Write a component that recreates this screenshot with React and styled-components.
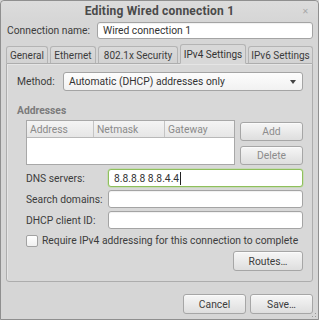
import React from 'react';
import styled, { createGlobalStyle } from 'styled-components';

const Global = createGlobalStyle`
  html, body {
    margin: 0;
    padding: 0;
    background: #d6d6d6;
  }
  * {
    box-sizing: border-box;
  }
`;

const Window = styled.div`
  width: 319px;
  height: 320px;
  border: 1px solid #8f8f8f;
  border-radius: 4px 4px 0 0;
  background: #d6d6d6;
  font-family: Roboto, 'Liberation Sans', sans-serif;
  font-size: 10.3px;
  line-height: 13px;
  color: #3c3c3c;
  display: flex;
  flex-direction: column;
  position: relative;
`;

const TitleBar = styled.div`
  height: 20px;
  display: grid;
  grid-template-columns: 1fr auto 1fr;
  align-items: center;
  background: linear-gradient(#dcdcdc, #d6d6d6);
  border-radius: 4px 4px 0 0;
`;

const Title = styled.div`
  grid-column: 2;
  font-weight: bold;
  font-size: 12px;
  letter-spacing: 0.2px;
  color: #4a4a4a;
`;

const Close = styled.div`
  justify-self: end;
  margin-right: 9px;
  color: #a8a8a8;
  font-size: 8px;
`;

const Body = styled.div`
  padding: 1px 5px 0 5px;
  flex: 1;
  display: flex;
  flex-direction: column;
`;

const Row = styled.div`
  display: flex;
  align-items: center;
  gap: ${({ gap }) => gap || 0}px;
  margin-top: ${({ mt }) => mt || 0}px;
`;

const Label = styled.span`
  width: ${({ w }) => w}px;
  flex: none;
  padding-left: ${({ pl }) => pl || 0}px;
  white-space: nowrap;
`;

const Input = styled.div`
  flex: 1;
  height: ${({ h }) => h || 18}px;
  background: #fff;
  border: 1px solid ${({ focused }) => (focused ? '#8fbf5c' : '#a4a4a4')};
  border-radius: 3px;
  box-shadow: ${({ focused }) => (focused ? '0 0 0 0.5px #b7d99a' : 'inset 0 1px 1px rgba(0,0,0,0.06)')};
  padding: 0 5px;
  display: flex;
  align-items: center;
  color: #333;
`;

const Caret = styled.span`
  display: inline-block;
  width: 1px;
  height: 13px;
  background: #222;
  margin-left: 1px;
`;

const Tabs = styled.div`
  display: flex;
  align-items: flex-end;
  gap: 2px;
  margin-top: 5px;
  height: 19px;
  position: relative;
  z-index: 1;
`;

const Tab = styled.div`
  width: ${({ w }) => w}px;
  height: ${({ active }) => (active ? 20 : 17)}px;
  display: flex;
  align-items: center;
  justify-content: center;
  font-size: 10px;
  border: 1px solid #b4b4b4;
  border-bottom: ${({ active }) => (active ? '1px solid #d8d8d8' : 'none')};
  border-radius: 3px 3px 0 0;
  background: ${({ active }) => (active ? '#d8d8d8' : 'linear-gradient(#dadada, #d2d2d2)')};
  color: ${({ active }) => (active ? '#333' : '#3c3c3c')};
  margin-bottom: ${({ active }) => (active ? -1 : 0)}px;
  white-space: nowrap;
`;

const Panel = styled.div`
  height: 219px;
  border: 1px solid #adadad;
  border-radius: 0 0 3px 3px;
  background: #d8d8d8;
  box-shadow: inset 1px 1px 0 rgba(255,255,255,0.35);
  padding: 8px 9px 0 10px;
  display: flex;
  flex-direction: column;
`;

const Combo = styled.div`
  flex: 1;
  height: 19px;
  border: 1px solid #a4a4a4;
  border-radius: 3px;
  background: linear-gradient(#fdfdfd, #f1f1f1);
  display: flex;
  align-items: center;
  justify-content: space-between;
  padding: 0 6px 0 5px;
  color: #333;
`;

const Arrow = styled.span`
  width: 0;
  height: 0;
  border-left: 3px solid transparent;
  border-right: 3px solid transparent;
  border-top: 4px solid #444;
`;

const Section = styled.div`
  font-weight: bold;
  color: #7b7b7b;
  margin-top: 13px;
`;

const AddrRow = styled.div`
  display: flex;
  gap: 5px;
  margin-top: 3px;
  padding-left: 9px;
`;

const Table = styled.div`
  width: 210px;
  height: 45px;
  border: 1px solid #a8a8a8;
  background: #fff;
  display: flex;
  flex-direction: column;
`;

const Header = styled.div`
  display: grid;
  grid-template-columns: 67px 71px 1fr;
  height: 17px;
  background: linear-gradient(#f4f4f4, #e6e6e6);
  border-bottom: 1px solid #b8b8b8;
`;

const HeadCell = styled.div`
  color: #8a8a8a;
  padding-left: 3px;
  display: flex;
  align-items: center;
  border-right: ${({ last }) => (last ? 'none' : '1px solid #c4c4c4')};
`;

const ButtonCol = styled.div`
  display: flex;
  flex-direction: column;
  gap: 5px;
  margin-top: 2px;
`;

const Button = styled.div`
  width: ${({ w }) => w}px;
  height: ${({ h }) => h || 20}px;
  border: 1px solid #a6a6a6;
  border-radius: 3px;
  background: linear-gradient(#f6f6f6, #dedede);
  box-shadow: inset 0 1px 0 rgba(255,255,255,0.6);
  display: flex;
  align-items: center;
  justify-content: center;
  color: ${({ disabled }) => (disabled ? '#8c8c8c' : '#3c3c3c')};
`;

const Fields = styled.div`
  display: flex;
  flex-direction: column;
  gap: 3px;
  margin-top: 4px;
  padding-left: 9px;
`;

const Check = styled.span`
  width: 12px;
  height: 12px;
  border: 1px solid #a2a2a2;
  border-radius: 2px;
  background: linear-gradient(#ffffff, #f0f0f0);
  flex: none;
`;

const RightRow = styled.div`
  display: flex;
  justify-content: flex-end;
  gap: ${({ gap }) => gap || 0}px;
  margin-top: ${({ mt }) => mt || 0}px;
`;

const Grip = styled.svg`
  position: absolute;
  right: 1px;
  bottom: 1px;
`;

const tabs = [
  { label: 'General', w: 42 },
  { label: 'Ethernet', w: 46 },
  { label: '802.1x Security', w: 80 },
  { label: 'IPv4 Settings', w: 66, active: true },
  { label: 'IPv6 Settings', w: 65 },
];

export default function App() {
  return (
    <>
      <Global />
      <Window>
        <TitleBar>
          <Title>Editing Wired connection 1</Title>
          <Close>✕</Close>
        </TitleBar>
        <Body>
          <Row>
            <Label w={91} pl={1}>Connection name:</Label>
            <Input h={17}>Wired connection 1</Input>
          </Row>
          <Tabs>
            {tabs.map((t) => (
              <Tab key={t.label} w={t.w} active={t.active}>{t.label}</Tab>
            ))}
          </Tabs>
          <Panel>
            <Row>
              <Label w={46}>Method:</Label>
              <Combo>
                Automatic (DHCP) addresses only
                <Arrow />
              </Combo>
            </Row>
            <Section>Addresses</Section>
            <AddrRow>
              <Table>
                <Header>
                  <HeadCell>Address</HeadCell>
                  <HeadCell>Netmask</HeadCell>
                  <HeadCell last>Gateway</HeadCell>
                </Header>
              </Table>
              <ButtonCol>
                <Button w={63} h={19} disabled>Add</Button>
                <Button w={63} h={19} disabled>Delete</Button>
              </ButtonCol>
            </AddrRow>
            <Fields>
              <Row>
                <Label w={82}>DNS servers:</Label>
                <Input focused>8.8.8.8 8.8.4.4<Caret /></Input>
              </Row>
              <Row>
                <Label w={82}>Search domains:</Label>
                <Input />
              </Row>
              <Row>
                <Label w={82}>DHCP client ID:</Label>
                <Input />
              </Row>
              <Row gap={4} mt={2}>
                <Check />
                <span>Require IPv4 addressing for this connection to complete</span>
              </Row>
            </Fields>
            <RightRow mt={4}>
              <Button w={70}>Routes…</Button>
            </RightRow>
          </Panel>
          <RightRow gap={4} mt={12}>
            <Button w={63}>Cancel</Button>
            <Button w={63}>Save…</Button>
          </RightRow>
        </Body>
        <Grip width="5" height="5" viewBox="0 0 5 5">
          <rect x="3" y="0" width="1" height="1" fill="#999" />
          <rect x="3" y="3" width="1" height="1" fill="#999" />
          <rect x="0" y="3" width="1" height="1" fill="#999" />
        </Grip>
      </Window>
    </>
  );
}
